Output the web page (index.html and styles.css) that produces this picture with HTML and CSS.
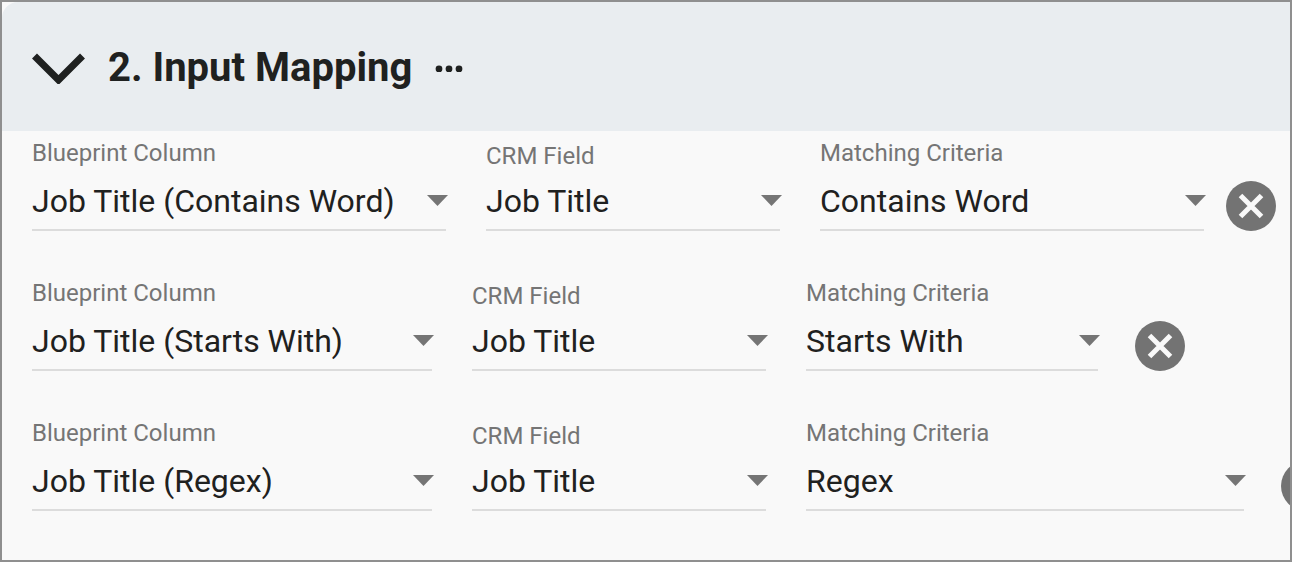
FILE: index.html
```html
<!DOCTYPE html>
<html lang="en">
<head>
    <meta charset="UTF-8">
    <meta name="viewport" content="width=device-width, initial-scale=1.0">
    <title>Input Mapping</title>

    <link rel="stylesheet" href="styles.css">
</head>
<body>
    <main class="panel">
        <header class="panel-header">
            <button type="button" class="icon-button" aria-label="Collapse section">
                <svg class="chevron" width="54" height="32" viewBox="0 0 54 32"><path d="M3.5 4 L27.5 28 L51.5 4"/></svg>
            </button>
            <h1>2. Input Mapping</h1>
            <button type="button" class="icon-button" aria-label="More options">
                <svg class="dots" width="28" height="8" viewBox="0 0 28 8"><circle cx="4" cy="5" r="3.4"/><circle cx="14" cy="5" r="3.4"/><circle cx="24" cy="5" r="3.4"/></svg>
            </button>
        </header>

        <form class="mappings">
            <div class="mapping-row">
                <div class="field column-wide">
                    <label for="column1">Blueprint Column</label>
                    <div class="select-box">
                        <select id="column1"><option>Job Title (Contains Word)</option></select>
                        <svg class="arrow" viewBox="0 0 21 11"><path d="M0 0h21L10.5 11z"/></svg>
                    </div>
                </div>
                <div class="field crm">
                    <label for="crm1">CRM Field</label>
                    <div class="select-box">
                        <select id="crm1"><option>Job Title</option></select>
                        <svg class="arrow" viewBox="0 0 21 11"><path d="M0 0h21L10.5 11z"/></svg>
                    </div>
                </div>
                <div class="field criteria-contains">
                    <label for="criteria1">Matching Criteria</label>
                    <div class="select-box">
                        <select id="criteria1"><option>Contains Word</option></select>
                        <svg class="arrow" viewBox="0 0 21 11"><path d="M0 0h21L10.5 11z"/></svg>
                    </div>
                </div>
                <button type="button" class="remove remove-near" aria-label="Remove mapping">
                    <svg viewBox="0 0 50 50"><circle cx="25" cy="25" r="25"/><path d="M14.5 14.5 L35.5 35.5 M35.5 14.5 L14.5 35.5"/></svg>
                </button>
            </div>

            <div class="mapping-row">
                <div class="field column">
                    <label for="column2">Blueprint Column</label>
                    <div class="select-box">
                        <select id="column2"><option>Job Title (Starts With)</option></select>
                        <svg class="arrow" viewBox="0 0 21 11"><path d="M0 0h21L10.5 11z"/></svg>
                    </div>
                </div>
                <div class="field crm">
                    <label for="crm2">CRM Field</label>
                    <div class="select-box">
                        <select id="crm2"><option>Job Title</option></select>
                        <svg class="arrow" viewBox="0 0 21 11"><path d="M0 0h21L10.5 11z"/></svg>
                    </div>
                </div>
                <div class="field criteria-starts">
                    <label for="criteria2">Matching Criteria</label>
                    <div class="select-box">
                        <select id="criteria2"><option>Starts With</option></select>
                        <svg class="arrow" viewBox="0 0 21 11"><path d="M0 0h21L10.5 11z"/></svg>
                    </div>
                </div>
                <button type="button" class="remove" aria-label="Remove mapping">
                    <svg viewBox="0 0 50 50"><circle cx="25" cy="25" r="25"/><path d="M14.5 14.5 L35.5 35.5 M35.5 14.5 L14.5 35.5"/></svg>
                </button>
            </div>

            <div class="mapping-row">
                <div class="field column">
                    <label for="column3">Blueprint Column</label>
                    <div class="select-box">
                        <select id="column3"><option>Job Title (Regex)</option></select>
                        <svg class="arrow" viewBox="0 0 21 11"><path d="M0 0h21L10.5 11z"/></svg>
                    </div>
                </div>
                <div class="field crm">
                    <label for="crm3">CRM Field</label>
                    <div class="select-box">
                        <select id="crm3"><option>Job Title</option></select>
                        <svg class="arrow" viewBox="0 0 21 11"><path d="M0 0h21L10.5 11z"/></svg>
                    </div>
                </div>
                <div class="field criteria-regex">
                    <label for="criteria3">Matching Criteria</label>
                    <div class="select-box">
                        <select id="criteria3"><option>Regex</option></select>
                        <svg class="arrow" viewBox="0 0 21 11"><path d="M0 0h21L10.5 11z"/></svg>
                    </div>
                </div>
                <button type="button" class="remove" aria-label="Remove mapping">
                    <svg viewBox="0 0 50 50"><circle cx="25" cy="25" r="25"/><path d="M14.5 14.5 L35.5 35.5 M35.5 14.5 L14.5 35.5"/></svg>
                </button>
            </div>
        </form>
    </main>
</body>
</html>
```

FILE: styles.css
```css
* {
    box-sizing: border-box;
}

body {
    margin: 0;
    font-family: Roboto, "Liberation Sans", sans-serif;
    color: #1f2120;
    background: #f9f9f9;
}

.panel {
    min-height: 100vh;
    border: 2px solid #8f8f8f;
    overflow: hidden;
}

.panel-header {
    display: flex;
    align-items: center;
    gap: 20px;
    padding: 41px 29px 39px;
    background: #e9edf0;
    border-top-left-radius: 16px;
}

h1 {
    margin: 0;
    padding: 0 3px;
    font-size: 40px;
    line-height: 49px;
    font-weight: 700;
}

button {
    padding: 0;
    border: none;
    background: none;
    cursor: pointer;
}

svg {
    display: block;
}

.icon-button {
    flex: none;
}

.chevron path {
    fill: none;
    stroke: #1f2120;
    stroke-width: 7;
}

.dots {
    fill: #1f2120;
}

.mapping-row {
    display: flex;
    height: 140px;
    padding-left: 30px;
}

.field {
    flex: none;
    margin-right: 40px;
}

.column-wide {
    width: 414px;
}

.column {
    width: 400px;
}

.crm {
    width: 294px;
}

.criteria-contains {
    width: 384px;
}

.criteria-starts {
    width: 292px;
}

.criteria-regex {
    width: 438px;
}

label {
    display: block;
    height: 46px;
    padding-top: 8px;
    font-size: 24px;
    line-height: 28px;
    color: #757575;
}

.crm label {
    padding-top: 11px;
}

.select-box {
    position: relative;
    border-bottom: 2px solid #dcdcdc;
}

select {
    display: block;
    width: 100%;
    height: 52px;
    padding: 0 24px 4px 0;
    border: none;
    appearance: none;
    background: none;
    font-family: inherit;
    font-size: 32px;
    color: inherit;
}

.arrow {
    position: absolute;
    top: 18px;
    right: -2px;
    width: 21px;
    height: 11px;
    fill: #757575;
    pointer-events: none;
}

.remove {
    flex: none;
    width: 50px;
    height: 50px;
    margin: 50px 0 0 -3px;
}

.remove-near {
    margin-left: -18px;
}

.remove circle {
    fill: #737373;
}

.remove path {
    stroke: #f9f9f9;
    stroke-width: 5;
}
```
